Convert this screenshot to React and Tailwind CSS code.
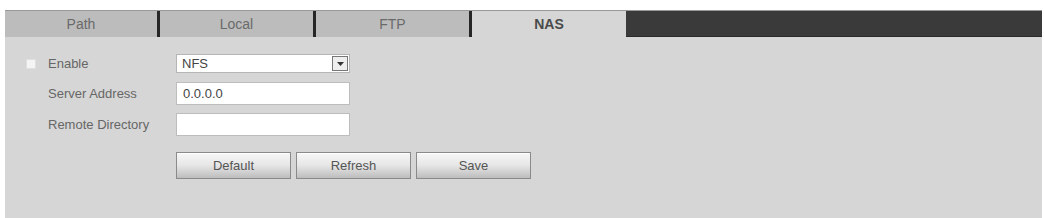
import React from "react";

// Pestañas de la configuracion de almacenamiento
const tabs = [
  { label: "Path", w: "w-[152px]" },
  { label: "Local", w: "w-[153px]" },
  { label: "FTP", w: "w-[153px]" },
  { label: "NAS", w: "w-[154px]", active: true },
];

const Boton = ({ children }) => (
  <button className="w-[115px] h-[27px] border border-[#8a8a8a] bg-gradient-to-b from-[#f7f7f7] via-[#e6e6e6] to-[#bdbdbd] text-[13px] text-[#555] shadow-[inset_0_1px_0_#fff]">
    {children}
  </button>
);

export default function App() {
  return (
    <div
      className="w-[1045px] h-[218px] bg-white pt-[10px] pl-[5px] pr-[3px] flex flex-col"
      style={{ fontFamily: '"Liberation Sans", Arial, sans-serif' }}
    >
      {/* Barra de pestañas */}
      <div className="h-[27px] flex bg-[#3a3a3a] border-t border-[#999]">
        {tabs.map((t, i) => (
          <div key={t.label} className="flex">
            {i > 0 && <div className="w-[3px] bg-[#262626]" />}
            <div
              className={`${t.w} flex items-center justify-center text-[14px] ${
                t.active
                  ? "bg-[#d6d6d6] font-bold text-[#4a4a4a]"
                  : "bg-[#bcbcbc] text-[#6a6a6a]"
              }`}
            >
              {t.label}
            </div>
          </div>
        ))}
        <div className="flex-1 border-b border-[#2a2a2a]" />
      </div>

      {/* Contenido */}
      <div className="flex-1 bg-[#d6d6d6] pl-[21px] pt-[17px] text-[13px] text-[#666]">
        <div className="flex items-center h-[19px]">
          <div className="w-[150px] flex items-center">
            <span className="w-[10px] h-[10px] bg-[#f4f4f4] border border-[#e0e0e0]" />
            <span className="ml-[12px]">Enable</span>
          </div>
          <div className="w-[174px] h-[19px] bg-white border border-[#b5b5b5] flex items-center justify-between">
            <span className="pl-[5px] text-[13px] text-[#444]">NFS</span>
            <span className="w-[16px] h-[15px] mr-[1px] border border-[#777] bg-[#eee] flex items-center justify-center">
              <svg width="7" height="4" viewBox="0 0 7 4">
                <path d="M0 0h7L3.5 4z" fill="#333" />
              </svg>
            </span>
          </div>
        </div>

        <div className="flex items-center h-[23px] mt-[9px]">
          <div className="w-[150px] pl-[22px]">Server Address</div>
          <div className="w-[174px] h-[23px] bg-white border border-[#bdbdbd] flex items-center pl-[6px] text-[13px] text-[#444]">
            0.0.0.0
          </div>
        </div>

        <div className="flex items-center h-[23px] mt-[8px]">
          <div className="w-[150px] pl-[22px]">Remote Directory</div>
          <div className="w-[174px] h-[23px] bg-white border border-[#bdbdbd]" />
        </div>

        <div className="flex gap-[5px] ml-[150px] mt-[16px]">
          <Boton>Default</Boton>
          <Boton>Refresh</Boton>
          <Boton>Save</Boton>
        </div>
      </div>
    </div>
  );
}
